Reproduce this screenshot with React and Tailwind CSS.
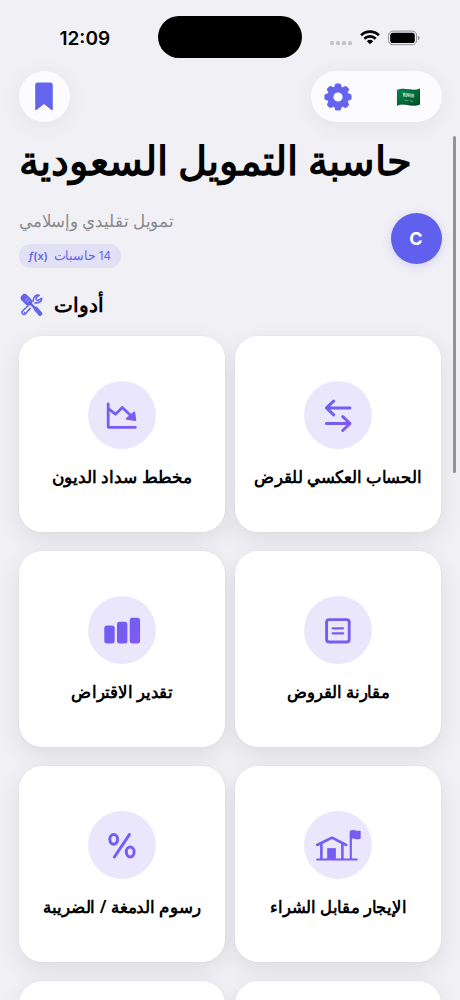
import React from "react";

const INK = "url(#ink)";

function InkDefs() {
  return (
    <defs>
      <linearGradient id="ink" gradientUnits="userSpaceOnUse" x1="14" y1="14" x2="54" y2="54">
        <stop offset="0" stopColor="#6563f0" />
        <stop offset="1" stopColor="#8558f4" />
      </linearGradient>
    </defs>
  );
}

function DebtIcon() {
  return (
    <g fill="none" stroke={INK} strokeWidth="2.8" strokeLinecap="round" strokeLinejoin="round">
      <path d="M20.2 23v23.300h27.200" />
      <path d="M20.500 27.800l7 5.400 6.800-6.600 7.600 7.200" />
      <path d="M46.200 31.400L38.800 37.800l8.400 1.200z" fill={INK} strokeWidth="2" />
    </g>
  );
}

function SwapIcon() {
  return (
    <g fill="none" stroke={INK} strokeWidth="3" strokeLinecap="round" strokeLinejoin="round">
      <path d="M46 26.900H22.400M29.700 20.200L22.400 26.900l7.300 7" />
      <path d="M22.400 42.500H46M38.700 35.700l7.300 6.800-7.300 7" />
    </g>
  );
}

function BarsIcon() {
  return (
    <g fill={INK}>
      <rect x="16.300" y="29.600" width="10.400" height="17.800" rx="2.600" />
      <rect x="29" y="25.800" width="10.400" height="21.600" rx="2.600" />
      <rect x="41.700" y="21.800" width="10.400" height="25.600" rx="2.600" />
    </g>
  );
}

function EqualIcon() {
  return (
    <g fill="none" stroke={INK} strokeWidth="2.900" strokeLinecap="round">
      <rect x="22.600" y="23.600" width="22.600" height="22.400" rx="2.600" />
      <path d="M28.700 32.300h10.400M28.700 37.400h10.400" strokeWidth="2.300" />
    </g>
  );
}

function PercentIcon() {
  return (
    <g fill="none" stroke={INK} strokeWidth="3" strokeLinecap="round">
      <path d="M41.400 23.600L26.400 46" />
      <ellipse cx="25.700" cy="28.300" rx="3.900" ry="4.900" />
      <ellipse cx="42.200" cy="41" rx="3.900" ry="4.900" />
    </g>
  );
}

function HouseIcon() {
  return (
    <g fill="none" stroke={INK} strokeWidth="2.200" strokeLinecap="round" strokeLinejoin="round">
      <path d="M13.200 48.500h39.500" />
      <path d="M13.200 34L28 26.700 42.200 34" strokeWidth="2.600" />
      <path d="M17.400 32.500v15.500M38.400 32.500v15.500" strokeWidth="2.600" />
      <path d="M23.900 37.500h7.600v10.400h-7.600z" fill={INK} strokeWidth="0.800" />
      <path d="M46.800 48V20.800" />
      <path d="M47 20.600c3-1.400 5.600 1 8.600.1v6.200c-3 1-5.600-1.300-8.600-.1z" fill={INK} />
    </g>
  );
}

const CARDS = [
  [
    { title: "مخطط سداد الديون", Icon: DebtIcon, fit: "scale-x-100" },
    { title: "الحساب العكسي للقرض", Icon: SwapIcon, fit: "scale-x-[0.973]" },
  ],
  [
    { title: "تقدير الاقتراض", Icon: BarsIcon, fit: "scale-x-[0.975]" },
    { title: "مقارنة القروض", Icon: EqualIcon, fit: "scale-x-[0.967]" },
  ],
  [
    { title: "رسوم الدمغة / الضريبة", Icon: PercentIcon, fit: "scale-x-[0.985]" },
    { title: "الإيجار مقابل الشراء", Icon: HouseIcon, fit: "scale-x-[0.965]" },
  ],
];

const CARD = "relative h-[196px] w-[206px] shrink-0 rounded-[23px] bg-white";
const SHADE =
  "h-[196px] w-[206px] rounded-[23px] shadow-[0_8px_24px_rgba(0,0,0,0.085),0_0_1px_rgba(0,0,0,0.16)]";

function Card({ title, Icon, fit }) {
  return (
    <div className={SHADE}>
      <div className={CARD + " flex flex-col items-center pt-[44.500px]"}>
        <div className="size-[68.500px] rounded-full bg-[#eae7fd]">
          <svg viewBox="0 0 68.500 68.500" className="size-[68.500px]">
            <InkDefs />
            <Icon />
          </svg>
        </div>
        <div dir="rtl" className={"mt-[15px] h-[26px] text-[17px] leading-[26px] font-semibold whitespace-nowrap " + fit}>
          {title}
        </div>
      </div>
    </div>
  );
}

function StatusBar() {
  return (
    <div className="flex h-[71px] items-start pt-4">
      <div className="flex h-[44px] w-[158px] items-center pl-[59.500px] font-['Inter'] text-[19px] leading-none font-semibold">
        12:09
      </div>
      <div className="h-[42px] w-[144px] rounded-full bg-black" />
      <div className="flex h-[43px] items-center pl-[28px]">
        <div className="mt-[10px] flex gap-[2px]">
          <i className="size-[4px] rounded-[1.500px] bg-[#c3c2c7]" />
          <i className="size-[4px] rounded-[1.500px] bg-[#c3c2c7]" />
          <i className="size-[4px] rounded-[1.500px] bg-[#c3c2c7]" />
          <i className="size-[4px] rounded-[1.500px] bg-[#c3c2c7]" />
        </div>
        <svg className="ml-[8px] h-[15px] w-[20px]" viewBox="0 0 20 15" fill="none" stroke="#000" strokeWidth="2.600">
          <path d="M1.100 5.300a12.700 12.700 0 0 1 17.800 0" />
          <path d="M4.300 8.700a8.200 8.200 0 0 1 11.400 0" />
          <path d="M10 14.200L6.900 11.200a4.600 4.600 0 0 1 6.200 0z" fill="#000" stroke="none" />
        </svg>
        <svg className="ml-[8px] h-[16px] w-[32px]" viewBox="0 0 32 16">
          <rect x="0.600" y="1.100" width="28" height="13.600" rx="4.300" fill="none" stroke="#8e8e93" />
          <rect x="2.200" y="2.700" width="24.600" height="10.400" rx="2.900" fill="#000" />
          <path d="M30 6v4c1.200-.4 1.700-1.200 1.700-2S31.200 6.400 30 6z" fill="#8e8e93" />
        </svg>
      </div>
    </div>
  );
}

function Gear() {
  const teeth = [0, 45, 90, 135, 180, 225, 270, 315];
  return (
    <svg className="size-[28px]" viewBox="-14 -14 28 28" fill="#6464ee">
      {teeth.map((a) => (
        <path key={a} transform={`rotate(${a})`} d="M-4.300-8.500L-2.900-12.400Q-2.400-13.600-1.300-13.600H1.300Q2.400-13.600 2.900-12.400L4.300-8.500z" />
      ))}
      <circle r="7.500" fill="none" stroke="#6464ee" strokeWidth="5.800" />
    </svg>
  );
}

function ToolsIcon() {
  return (
    <svg className="h-[24px] w-[24px]" viewBox="0 0 24 24" fill="none" strokeLinecap="round" strokeLinejoin="round">
      <path
        d="M21.600 5.200l-3.300 2.200-2-.7-.4-2.100 3.300-2.300c-2.600-.9-5.800.9-5.900 4.400 0 .9.100 1.300-.4 1.800l-10 9c-2.400 2.500.5 5.200 2.800 2.900l8.800-10.200c.5-.5 1-.4 1.800-.3 3.400.2 5.700-2 5.300-4.700z"
        stroke="#6464ee"
        strokeWidth="1.600"
      />
      <path d="M10.300 10.500l9.600 9.600" stroke="#f1f0f5" strokeWidth="6" />
      <path d="M4.600 4.900l3.800 3.800" stroke="#6464ee" strokeWidth="7.800" />
      <path d="M9.500 9.700l5.500 5.500" stroke="#6464ee" strokeWidth="2.400" />
      <path d="M15.800 15.800l4.400 4.900" stroke="#6464ee" strokeWidth="4.400" />
      <path d="M5.600 7.100l2-2M7.400 8.900l2-2" stroke="#d9d8fa" strokeWidth="0.700" />
      <circle cx="4.600" cy="19.600" r="0.800" fill="#6464ee" />
    </svg>
  );
}

export default function App() {
  return (
    <div className="relative h-[1000px] w-[460px] overflow-hidden bg-[#f1f0f5] font-['Noto_Sans',sans-serif] text-black">
      <StatusBar />

      <header className="flex h-[51px] items-center justify-between px-[18.500px]">
        <button className="flex size-[51px] items-center justify-center rounded-full bg-[#fcfcff] shadow-[0_4px_22px_rgba(0,0,0,0.06)]">
          <svg className="h-[29px] w-[18px]" viewBox="0 0 18 29" fill="#6464ee">
            <path d="M2.800.5h12.400Q17.800.5 17.800 3v24.300q0 1.600-1.300.7L9 22 1.500 28q-1.300.9-1.300-.7V3Q.2.5 2.800.5z" />
          </svg>
        </button>
        <div className="flex h-[51px] w-[131px] items-center justify-between rounded-full bg-[#fcfcff] pr-[20.500px] pl-[13.500px] shadow-[0_4px_22px_rgba(0,0,0,0.06)]">
          <Gear />
          <span className="text-[20px] leading-none">🇸🇦</span>
        </div>
      </header>

      <h1 dir="rtl" className="ml-[18.500px] flex h-[76px] w-[394px] items-center text-[40.300px] leading-[76px] font-bold whitespace-nowrap">
        حاسبة التمويل السعودية
      </h1>

      <section className="flex h-[80px] items-center justify-between pr-[18.500px] pl-[18.500px]">
        <div className="flex flex-col items-start">
          <p dir="rtl" className="h-[32px] origin-left scale-x-[0.982] text-[17px] leading-[26px] whitespace-nowrap text-[#8a8a8e]">
            تمويل تقليدي وإسلامي
          </p>
          <div className="mt-[4px] flex h-[24px] w-[102px] items-center justify-between rounded-full bg-[#e1e0f5] px-[10px] text-[#6464ee]">
            <span className="font-['Inter'] text-[11px] font-semibold whitespace-nowrap">
              <i>ƒ</i>(x)
            </span>
            <span dir="rtl" className="origin-right scale-x-[0.97] text-[12.500px] leading-[22px] whitespace-nowrap">
              <span className="font-['Inter'] text-[12px]">14</span> حاسبات
            </span>
          </div>
        </div>
        <div className="flex size-[51px] items-center justify-center rounded-full bg-[#6060ee] font-['Inter'] text-[18px] font-bold text-white shadow-[0_2px_10px_rgba(96,96,238,0.2)]">
          C
        </div>
      </section>

      <div className="flex h-[58px] items-center gap-[10px] pb-[4px] pl-[20px]">
        <ToolsIcon />
        <h2 dir="rtl" className="text-[20px] leading-[30px] font-semibold">
          أدوات
        </h2>
      </div>

      <main className="flex flex-col gap-[19px] pl-[19px]">
        {CARDS.map((row) => (
          <div key={row[0].title} className="flex gap-[10px]">
            {row.map((c) => (
              <Card key={c.title} {...c} />
            ))}
          </div>
        ))}
        <div className="flex gap-[10px]">
          <div className={SHADE}>
            <div className={CARD} />
          </div>
          <div className={SHADE}>
            <div className={CARD} />
          </div>
        </div>
      </main>

      <div className="absolute top-[136px] right-[4px] h-[337px] w-[3px] rounded-full bg-[#939297]" />
    </div>
  );
}
